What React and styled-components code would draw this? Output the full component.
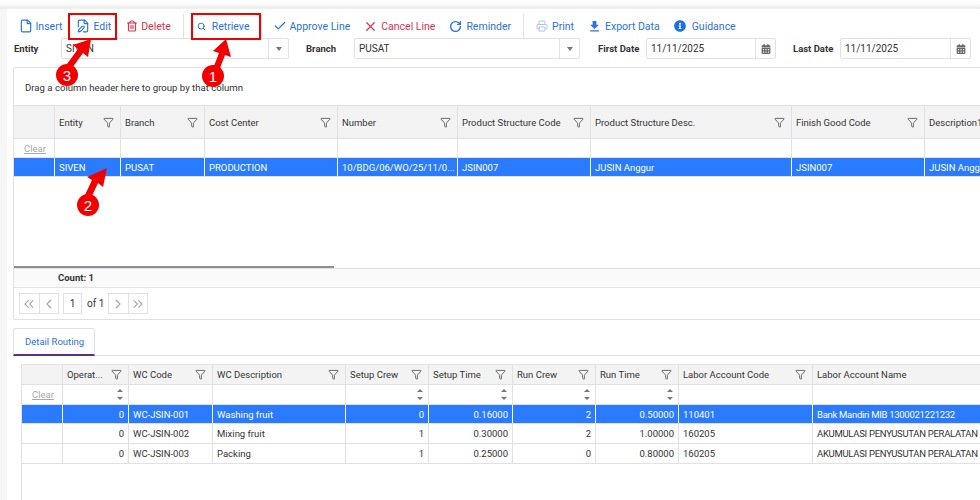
import React from "react";
import styled, { createGlobalStyle } from "styled-components";
import {
  File,
  FilePen,
  Trash2,
  Search,
  Check,
  X,
  RotateCw,
  Printer,
  Funnel,
  ChevronsLeft,
  ChevronLeft,
  ChevronRight,
  ChevronsRight,
} from "lucide-react";
import { FaCalendarAlt, FaInfoCircle } from "react-icons/fa";
import { MdFileDownload } from "react-icons/md";

const GlobalStyle = createGlobalStyle`
  html, body {
    margin: 0;
    padding: 0;
    background: #ffffff;
  }
  * {
    box-sizing: border-box;
  }
`;

const Page = styled.div`
  position: relative;
  width: 980px;
  height: 500px;
  overflow: hidden;
  background: linear-gradient(#ffffff 0, #fbfbfb 4px, #ececec 8px, #f6f6f6 10px);
  padding: 9px 0 0 7px;
  font-family: Roboto, "Open Sans", sans-serif;
  font-size: 9.5px;
  color: #333333;
`;

const Main = styled.main`
  width: 973px;
  height: 491px;
  background: #ffffff;
  padding: 5px 0 0 6px;
  overflow: hidden;
`;

const Toolbar = styled.div`
  display: flex;
  align-items: center;
  height: 24px;
`;

const ToolButton = styled.button`
  display: flex;
  align-items: center;
  height: 24px;
  padding: 0 7.5px;
  border: none;
  background: none;
  font: inherit;
  font-size: 10.5px;
  color: ${(p) => p.$color || "#2a72e8"};
`;

const IconSlot = styled.span`
  display: flex;
  align-items: center;
  justify-content: center;
  flex: none;
  width: 11px;
  margin-right: ${(p) => p.$gap || 5}px;
  svg {
    flex: none;
  }
`;

const Separator = styled.span`
  width: 1px;
  height: 24px;
  margin: 0 4.5px;
  background: #e2e2e6;
`;

const FilterRow = styled.div`
  display: flex;
  align-items: center;
  height: 21px;
  padding-left: 1px;
`;

const FieldLabel = styled.label`
  width: ${(p) => p.$width}px;
  margin-left: ${(p) => p.$offset || 0}px;
  font-size: 9.5px;
  font-weight: 700;
  color: #333333;
`;

const Field = styled.div`
  display: flex;
  width: ${(p) => p.$width}px;
  height: 21px;
  border: 1px solid #e0e0e6;
  border-radius: 2px;
  background: #ffffff;
`;

const FieldValue = styled.span`
  flex: 1;
  padding: 0 4px;
  line-height: 19px;
  font-size: 10px;
`;

const FieldAddon = styled.span`
  display: flex;
  align-items: center;
  justify-content: center;
  width: 20px;
  border-left: 1px solid #e0e0e6;
  color: #666666;
`;

const Caret = styled.span`
  width: 0;
  height: 0;
  border-left: 3.5px solid transparent;
  border-right: 3.5px solid transparent;
  border-top: 4px solid #777777;
`;

const GridPanel = styled.section`
  width: 980px;
  height: 253px;
  margin-top: 8px;
  border: 1px solid #e0e0e6;
  border-radius: 2px;
  display: flex;
  flex-direction: column;
`;

const GroupHint = styled.div`
  height: 38px;
  flex: none;
  padding: 13px 0 0 11px;
  border-bottom: 1px solid #e0e0e6;
  font-size: 9.6px;
  line-height: 13px;
`;

const Row = styled.div`
  display: grid;
  grid-template-columns: ${(p) => p.$cols};
  height: ${(p) => p.$height}px;
  flex: none;
  border-bottom: 1px solid #e0e0e6;
  background: ${(p) => (p.$selected ? "#2a7bff" : p.$head ? "#f3f3f4" : "#ffffff")};
  color: ${(p) => (p.$selected ? "#ffffff" : "#333333")};
`;

const Cell = styled.div`
  display: flex;
  align-items: center;
  justify-content: ${(p) => (p.$right ? "flex-end" : "flex-start")};
  min-width: 0;
  padding: 0 4px;
  border-right: 1px solid ${(p) => (p.$selected ? "#ffffff" : "#e0e0e6")};
  font-size: 9.5px;
  letter-spacing: ${(p) => (p.$tight ? "-0.28px" : "normal")};
  white-space: nowrap;
  overflow: hidden;
`;

const HeadLabel = styled.span`
  flex: 1;
  min-width: 0;
  overflow: hidden;
  text-overflow: ellipsis;
`;

const FilterMark = styled.span`
  display: flex;
  flex: none;
  margin-right: 2px;
`;

const ClearLink = styled.span`
  width: 100%;
  text-align: right;
  padding-right: 4px;
  color: #a8a8a8;
  text-decoration: underline;
`;

const Spinner = styled.span`
  display: flex;
  flex-direction: column;
  gap: 5px;
  margin-left: auto;
  margin-right: 1px;
`;

const SpinUp = styled.i`
  width: 0;
  height: 0;
  border-left: 3.5px solid transparent;
  border-right: 3.5px solid transparent;
  border-bottom: 3.5px solid #777777;
`;

const SpinDown = styled(SpinUp)`
  border-bottom: none;
  border-top: 3.5px solid #777777;
`;

const GridBody = styled.div`
  flex: 1;
  position: relative;
`;

const ScrollThumb = styled.div`
  position: absolute;
  left: 0;
  bottom: 0;
  width: 320px;
  height: 2px;
  background: #8f8f8f;
`;

const CountBar = styled.div`
  height: 20px;
  flex: none;
  padding-left: 44px;
  border-top: 1px solid #e0e0e6;
  border-bottom: 1px solid #e0e0e6;
  background: #fafafa;
  font-size: 9.5px;
  font-weight: 700;
  line-height: 18px;
  color: #333333;
`;

const Pager = styled.div`
  display: flex;
  align-items: center;
  height: 31px;
  padding-left: 5px;
`;

const PagerGroup = styled.div`
  display: flex;
`;

const PagerButton = styled.span`
  display: flex;
  align-items: center;
  justify-content: center;
  width: 20.5px;
  height: 21px;
  margin-left: -1px;
  border: 1px solid #e0e0e6;
  color: #a6a6a6;
  &:first-child {
    margin-left: 0;
  }
`;

const PageInput = styled.span`
  width: 19px;
  height: 21px;
  margin-left: 4px;
  border: 1px solid #e0e0e6;
  text-align: center;
  font-size: 10px;
  line-height: 19px;
`;

const PageOf = styled.span`
  width: 26px;
  padding-left: 5px;
  font-size: 10px;
`;

const Tabs = styled.div`
  width: 967px;
  height: 28px;
  margin-top: 8px;
  border-bottom: 1px solid #e0e0e6;
`;

const Tab = styled.div`
  width: 82px;
  height: 28px;
  padding-left: 11px;
  border: 1px solid #e0e0e6;
  border-bottom: 2px solid #5b2d91;
  border-radius: 3px 3px 0 0;
  font-size: 9.5px;
  line-height: 26px;
  color: #2a72e8;
`;

const DetailGrid = styled.section`
  width: 972px;
  height: 140px;
  margin: 8px 0 0 8px;
  border-left: 1px solid #e0e0e6;
  border-top: 1px solid #e0e0e6;
`;

const Annotations = styled.svg`
  position: absolute;
  left: 0;
  top: 0;
  pointer-events: none;
`;

const RedBox = styled.div`
  position: absolute;
  left: ${(p) => p.$x}px;
  top: ${(p) => p.$y}px;
  width: ${(p) => p.$w}px;
  height: ${(p) => p.$h}px;
  border: 2px solid #f00000;
`;

const Badge = styled.div`
  position: absolute;
  left: ${(p) => p.$x - 11}px;
  top: ${(p) => p.$y - 11}px;
  width: 22px;
  height: 22px;
  border-radius: 50%;
  background: #f20000;
  color: #ffffff;
  font-family: "Liberation Sans", sans-serif;
  font-size: 15px;
  line-height: 23px;
  text-align: center;
`;

const masterCols = "41px 66px 84px 133px 120px 133px 201px 133px 200px";
const detailCols = "41px 66px 84px 133px 83px 84px 83px 83px 134px 200px";

const masterHead = [
  "Entity",
  "Branch",
  "Cost Center",
  "Number",
  "Product Structure Code",
  "Product Structure Desc.",
  "Finish Good Code",
  "Description1",
];
const masterRow = [
  "SIVEN",
  "PUSAT",
  "PRODUCTION",
  "10/BDG/06/WO/25/11/0...",
  "JSIN007",
  "JUSIN Anggur",
  "JSIN007",
  "JUSIN Anggur",
];

const detailHead = [
  { label: "Operat...", num: true },
  { label: "WC Code" },
  { label: "WC Description" },
  { label: "Setup Crew", num: true },
  { label: "Setup Time", num: true },
  { label: "Run Crew", num: true },
  { label: "Run Time", num: true },
  { label: "Labor Account Code" },
  { label: "Labor Account Name", nofilter: true },
];
const detailRows = [
  ["0", "WC-JSIN-001", "Washing fruit", "0", "0.16000", "2", "0.50000", "110401", "Bank Mandiri MIB 1300021221232"],
  ["0", "WC-JSIN-002", "Mixing fruit", "1", "0.30000", "2", "1.00000", "160205", "AKUMULASI PENYUSUTAN PERALATAN"],
  ["0", "WC-JSIN-003", "Packing", "1", "0.25000", "0", "0.80000", "160205", "AKUMULASI PENYUSUTAN PERALATAN"],
];
const rightAligned = [true, false, false, true, true, true, true, false, false];

const FilterIcon = () => (
  <FilterMark>
    <Funnel size={11} color="#444444" strokeWidth={1.7} />
  </FilterMark>
);

const DateField = ({ width, value }) => (
  <Field $width={width}>
    <FieldValue>{value}</FieldValue>
    <FieldAddon>
      <FaCalendarAlt size={10} color="#666666" />
    </FieldAddon>
  </Field>
);

const ComboField = ({ width, value }) => (
  <Field $width={width}>
    <FieldValue>{value}</FieldValue>
    <FieldAddon>
      <Caret />
    </FieldAddon>
  </Field>
);

const App = () => {
  return (
    <Page>
      <GlobalStyle />
      <Main>
        <Toolbar>
          <ToolButton><IconSlot $gap={4}><File size={14} /></IconSlot>Insert</ToolButton>
          <ToolButton><IconSlot><FilePen size={14} /></IconSlot>Edit</ToolButton>
          <ToolButton $color="#dc3550"><IconSlot $gap={4}><Trash2 size={12} strokeWidth={2.3} /></IconSlot>Delete</ToolButton>
          <Separator />
          <ToolButton><IconSlot $gap={5}><Search size={9} strokeWidth={2.6} /></IconSlot>Retrieve</ToolButton>
          <Separator />
          <ToolButton><IconSlot $gap={4}><Check size={14} strokeWidth={2.2} /></IconSlot>Approve Line</ToolButton>
          <ToolButton $color="#dc3550"><IconSlot><X size={15} /></IconSlot>Cancel Line</ToolButton>
          <ToolButton><IconSlot><RotateCw size={13} strokeWidth={2.6} /></IconSlot>Reminder</ToolButton>
          <Separator />
          <ToolButton><IconSlot><Printer size={12} color="#a9c6ee" /></IconSlot>Print</ToolButton>
          <ToolButton><IconSlot><MdFileDownload size={15} /></IconSlot>Export Data</ToolButton>
          <ToolButton><IconSlot $gap={6}><FaInfoCircle size={12} color="#1a6fe8" /></IconSlot>Guidance</ToolButton>
        </Toolbar>

        <FilterRow>
          <FieldLabel $width={47}>Entity</FieldLabel>
          <ComboField width={228} value="SIVEN" />
          <FieldLabel $width={48} $offset={17}>Branch</FieldLabel>
          <ComboField width={226} value="PUSAT" />
          <FieldLabel $width={48} $offset={18}>First Date</FieldLabel>
          <DateField width={130} value="11/11/2025" />
          <FieldLabel $width={47} $offset={17}>Last Date</FieldLabel>
          <DateField width={131} value="11/11/2025" />
        </FilterRow>

        <GridPanel>
          <GroupHint>Drag a column header here to group by that column</GroupHint>
          <Row $cols={masterCols} $height={33} $head>
            <Cell />
            {masterHead.map((label, i) => (
              <Cell key={label}>
                <HeadLabel>{label}</HeadLabel>
                {i < masterHead.length - 1 && <FilterIcon />}
              </Cell>
            ))}
          </Row>
          <Row $cols={masterCols} $height={19}>
            <Cell><ClearLink>Clear</ClearLink></Cell>
            {masterHead.map((label) => <Cell key={label} />)}
          </Row>
          <Row $cols={masterCols} $height={19} $selected>
            <Cell $selected />
            {masterRow.map((value, i) => <Cell key={i} $selected>{value}</Cell>)}
          </Row>
          <GridBody>
            <ScrollThumb />
          </GridBody>
          <CountBar>Count: 1</CountBar>
          <Pager>
            <PagerGroup>
              <PagerButton><ChevronsLeft size={16} strokeWidth={1.6} /></PagerButton>
              <PagerButton><ChevronLeft size={16} strokeWidth={1.6} /></PagerButton>
            </PagerGroup>
            <PageInput>1</PageInput>
            <PageOf>of 1</PageOf>
            <PagerGroup>
              <PagerButton><ChevronRight size={16} strokeWidth={1.6} /></PagerButton>
              <PagerButton><ChevronsRight size={16} strokeWidth={1.6} /></PagerButton>
            </PagerGroup>
          </Pager>
        </GridPanel>

        <Tabs>
          <Tab>Detail Routing</Tab>
        </Tabs>

        <DetailGrid>
          <Row $cols={detailCols} $height={20} $head>
            <Cell />
            {detailHead.map((col) => (
              <Cell key={col.label}>
                <HeadLabel>{col.label}</HeadLabel>
                {!col.nofilter && <FilterIcon />}
              </Cell>
            ))}
          </Row>
          <Row $cols={detailCols} $height={20}>
            <Cell><ClearLink>Clear</ClearLink></Cell>
            {detailHead.map((col) => (
              <Cell key={col.label}>
                {col.num && (
                  <Spinner>
                    <SpinUp />
                    <SpinDown />
                  </Spinner>
                )}
              </Cell>
            ))}
          </Row>
          {detailRows.map((row, r) => (
            <Row key={r} $cols={detailCols} $height={r === 0 ? 19 : 20} $selected={r === 0}>
              <Cell $selected={r === 0} />
              {row.map((value, i) => (
                <Cell key={i} $selected={r === 0} $right={rightAligned[i]} $tight={i === row.length - 1}>{value}</Cell>
              ))}
            </Row>
          ))}
        </DetailGrid>
      </Main>

      <Annotations width="980" height="500" viewBox="0 0 980 500">
        <polygon fill="#f00000" points="226,39 231,57 225,55 220,68 214,66 219,53 213,51" />
        <polygon fill="#f00000" points="91,39 88,57 83,53 72,68 67,64 78,49 73,45" />
        <polygon fill="#f00000" points="107,168 103,187 98,183 91,198 85,195 92,180 87,177" />
      </Annotations>
      <RedBox $x={68} $y={13} $w={49} $h={27} />
      <RedBox $x={191} $y={13} $w={70} $h={27} />
      <Badge $x={213} $y={76}>1</Badge>
      <Badge $x={88} $y={205}>2</Badge>
      <Badge $x={67} $y={75}>3</Badge>
    </Page>
  );
};

export default App;
